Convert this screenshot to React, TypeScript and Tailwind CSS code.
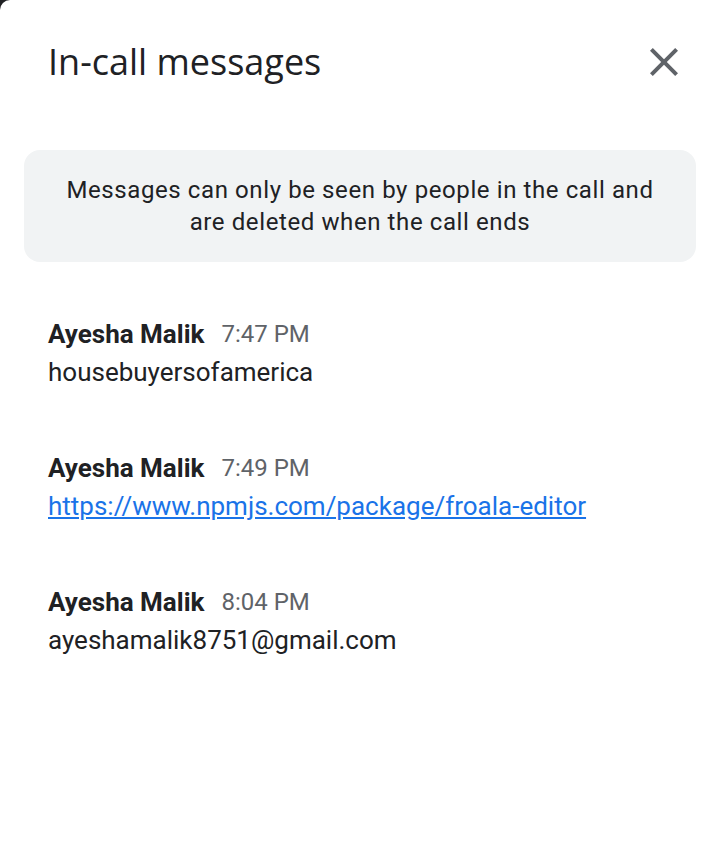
import React from "react";

const messages = [
  { name: "Ayesha Malik", time: "7:47 PM", text: "housebuyersofamerica", link: false },
  { name: "Ayesha Malik", time: "7:49 PM", text: "https://www.npmjs.com/package/froala-editor", link: true },
  { name: "Ayesha Malik", time: "8:04 PM", text: "ayeshamalik8751@gmail.com", link: false },
];

const App = () => {
  return (
    <div className="bg-[#202124] w-[708px] h-[850px]">
      <div
        className="bg-white w-full h-full rounded-tl-[10px] text-[#202124]"
        style={{ fontFamily: "Roboto, 'Open Sans', sans-serif" }}
      >
        <div className="flex items-center justify-between pl-12 pr-[20px] pt-[38px] h-[86px]">
          <h1 className="text-[36px] leading-none font-normal" style={{ fontFamily: "'Open Sans', Roboto, sans-serif" }}>
            In-call messages
          </h1>
          <button className="w-12 h-12 flex items-center justify-center text-[#5f6368]">
            <svg width="48" height="48" viewBox="0 0 24 24" fill="currentColor">
              <path d="M19 6.41 17.59 5 12 10.59 6.41 5 5 6.41 10.59 12 5 17.59 6.41 19 12 13.41 17.59 19 19 17.59 13.41 12z" />
            </svg>
          </button>
        </div>

        <div className="ml-6 mr-3 mt-[64px] h-[112px] rounded-2xl bg-[#f1f3f4] flex items-center justify-center text-center px-8">
          <p className="text-[24px] leading-[32px] tracking-[0.6px]">
            Messages can only be seen by people in the call and
            <br />
            are deleted when the call ends
          </p>
        </div>

        <div className="px-12 pt-[52px] flex flex-col gap-[58px]">
          {messages.map((m, i) => (
            <div key={i} className="flex flex-col">
              <div className="flex gap-[17px] h-[40px] items-center">
                <span className="text-[26px] font-bold">{m.name}</span>
                <span className="text-[24px] text-[#5f6368]">{m.time}</span>
              </div>
              {m.link ? (
                <a href="#" className="text-[26px] leading-[36px] text-[#1a73e8] underline">
                  {m.text}
                </a>
              ) : (
                <span className="text-[26px] leading-[36px]">{m.text}</span>
              )}
            </div>
          ))}
        </div>
      </div>
    </div>
  );
};

export default App;
